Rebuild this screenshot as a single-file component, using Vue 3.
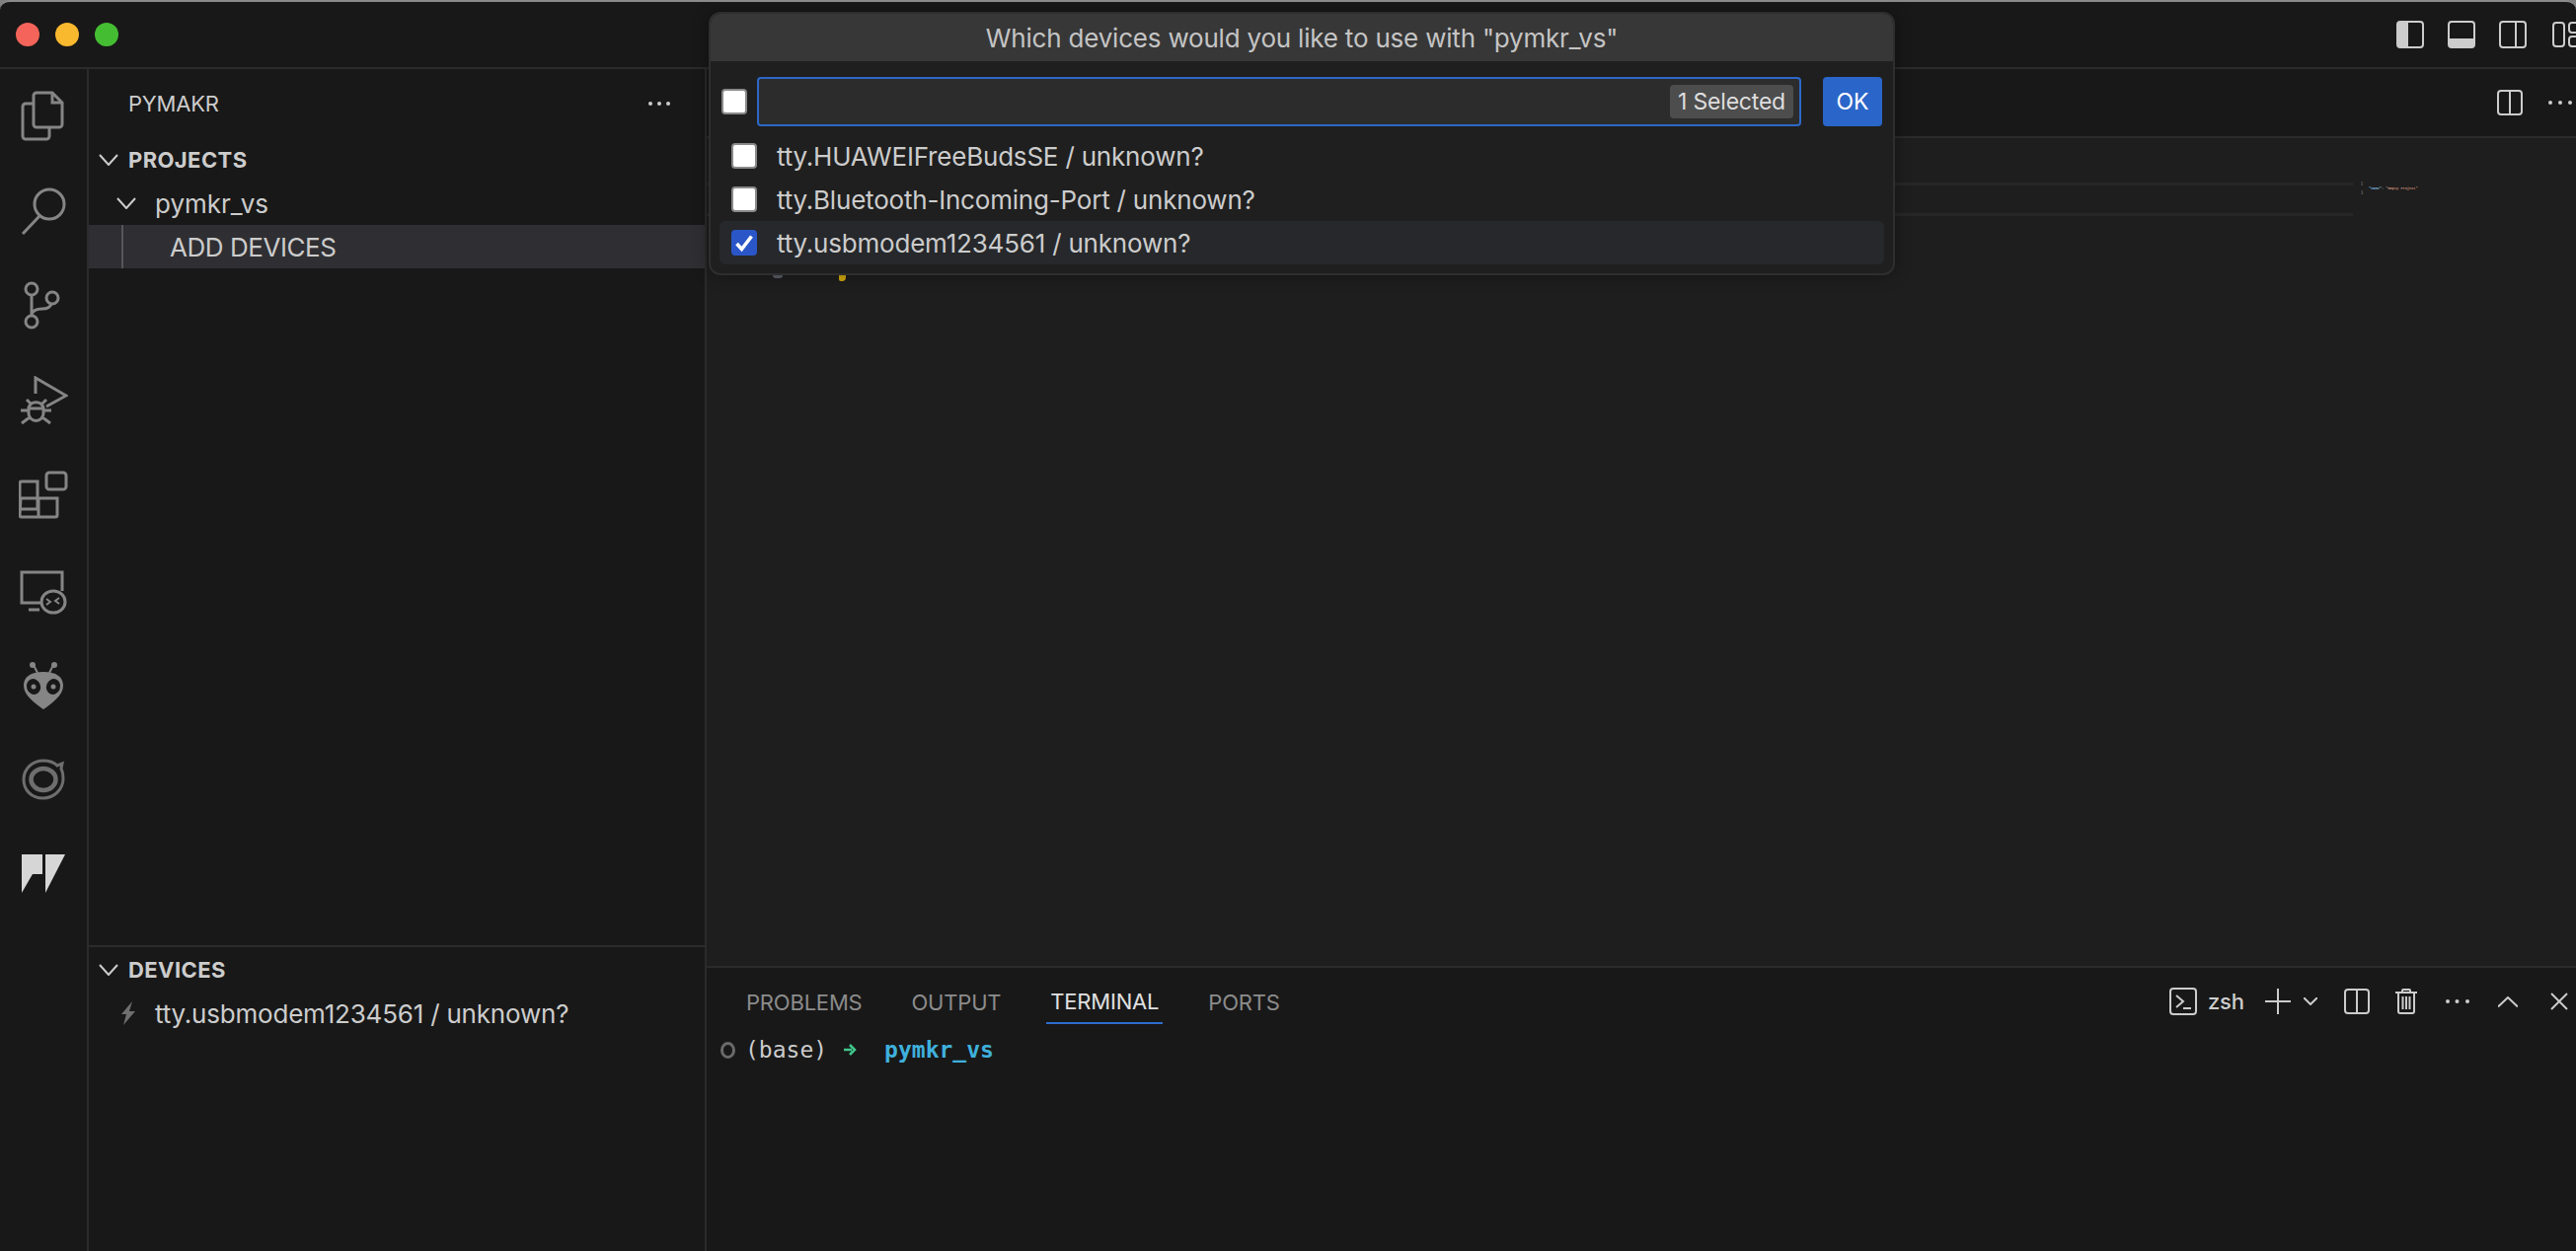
<script setup>
const activity = ['files', 'search', 'git', 'debug', 'ext', 'remote', 'pio', 'ring', 'flag']
const devices = [
  { name: 'tty.HUAWEIFreeBudsSE / unknown?', checked: false },
  { name: 'tty.Bluetooth-Incoming-Port / unknown?', checked: false },
  { name: 'tty.usbmodem1234561 / unknown?', checked: true },
]
const tabs = ['PROBLEMS', 'OUTPUT', 'TERMINAL', 'PORTS']
</script>

<template>
  <div class="window">
    <header class="titlebar">
      <div class="lights">
        <span class="light red"></span>
        <span class="light yellow"></span>
        <span class="light green"></span>
      </div>
      <div class="layout-icons">
        <svg width="28" height="28" viewBox="0 0 28 28"><rect x="1" y="1" width="26" height="26" rx="3" class="ln" /><path d="M1 4a3 3 0 0 1 3-3h8v26H4a3 3 0 0 1-3-3z" class="fl" /></svg>
        <svg width="28" height="28" viewBox="0 0 28 28"><rect x="1" y="1" width="26" height="26" rx="3" class="ln" /><path d="M1 18h26v6a3 3 0 0 1-3 3H4a3 3 0 0 1-3-3z" class="fl" /></svg>
        <svg width="28" height="28" viewBox="0 0 28 28"><rect x="1" y="1" width="26" height="26" rx="3" class="ln" /><path d="M17 1v26" class="ln" /></svg>
        <svg class="clip-icon" width="28" height="28" viewBox="0 0 28 28"><rect x="1" y="2" width="11" height="24" rx="3" class="ln" /><rect x="17" y="2" width="11" height="10" rx="3" class="ln" /><rect x="17" y="16" width="11" height="10" rx="3" class="ln" /></svg>
      </div>
    </header>

    <div class="workbench">
      <nav class="activity">
        <div v-for="a in activity" :key="a" class="act-cell" :class="'cell-' + a">
          <svg v-if="a === 'files'" width="48" height="52" viewBox="0 0 48 52" class="act"><path d="M17 2h16l10 10v22a3 3 0 0 1-3 3H17a3 3 0 0 1-3-3V5a3 3 0 0 1 3-3zM33 2v10h10M14 13H6a3 3 0 0 0-3 3v30a3 3 0 0 0 3 3h21a3 3 0 0 0 3-3v-9" /></svg>
          <svg v-else-if="a === 'search'" width="48" height="50" viewBox="0 0 48 50" class="act"><circle cx="30" cy="18" r="15" /><path d="M20 30 3 48" /></svg>
          <svg v-else-if="a === 'git'" width="40" height="50" viewBox="0 0 40 50" class="act"><circle cx="11" cy="8" r="6" /><circle cx="11" cy="41" r="6" /><circle cx="32" cy="17" r="6" /><path d="M11 14v21M11 34c1-5 5-6 11-6 5 0 8-2 9-5" /></svg>
          <svg v-else-if="a === 'debug'" width="50" height="50" viewBox="0 0 50 50" class="act"><path d="M17 18V2l31 18-20 11" /><path d="M10 32a8 8 0 0 1 15 0v6a7.500 7.500 0 0 1-15 0zM8 24l5 5M28 24l-5 5M2 35h8M25 35h8M3 48l8-6M32 48l-8-6M9 33h17" /></svg>
          <svg v-else-if="a === 'ext'" width="50" height="50" viewBox="0 0 50 50" class="act"><path d="M3 11h16v28H3a2 2 0 0 1-2-2V13a2 2 0 0 1 2-2zM2 28h37v17a2 2 0 0 1-2 2H3a2 2 0 0 1-2-2zM20 28v19" /><rect x="28" y="2" width="20" height="17" rx="3" /></svg>
          <svg v-else-if="a === 'remote'" width="50" height="46" viewBox="0 0 50 46" class="act"><path d="M22 33H3V2h41v19M10 40h11" /><ellipse cx="35" cy="32" rx="12" ry="11" /><path d="M28 29l4 3-4 3M41 28l-4 3 4 3" class="thin" /></svg>
          <svg v-else-if="a === 'pio'" width="42" height="50" viewBox="0 0 42 50"><path d="M21 10C8 10 1 15 1 24c0 10 12 18 20 24 8-6 20-14 20-24 0-9-7-14-20-14z" fill="#858585" /><path d="M15 11 11 3M27 11l4-8" stroke="#858585" stroke-width="2" /><circle cx="10" cy="3" r="3" fill="#858585" /><circle cx="32" cy="3" r="3" fill="#858585" /><ellipse cx="11" cy="25" rx="7" ry="8" fill="#181818" transform="rotate(-20 11 25)" /><ellipse cx="31" cy="25" rx="7" ry="8" fill="#181818" transform="rotate(20 31 25)" /><circle cx="11" cy="25" r="2.500" fill="#858585" /><circle cx="31" cy="25" r="2.500" fill="#858585" /></svg>
          <svg v-else-if="a === 'ring'" width="44" height="44" viewBox="0 0 44 44" class="ring"><path d="M41 6l-1 5c1.500 3 2 6.500 2 10 0 11-9 20-20.500 20S2 33 2 22 11 3 22 3c6 0 11 2 14 5z" stroke-width="3" /><ellipse cx="22" cy="22" rx="12.500" ry="11" stroke-width="4.500" /></svg>
          <svg v-else width="44" height="40" viewBox="0 0 44 40"><path d="M0 0h21v20h-10L0 39z" fill="#d6d6d6" /><path d="M24 0h20L24 39z" fill="#d6d6d6" /></svg>
        </div>
      </nav>

      <aside class="sidebar">
        <div class="side-main">
          <div class="side-head">
            <span class="side-title">PYMAKR</span>
            <svg class="dots-svg" width="24" height="6" viewBox="0 0 24 6"><circle cx="3" cy="3" r="2" /><circle cx="12" cy="3" r="2" /><circle cx="21" cy="3" r="2" /></svg>
          </div>
          <div class="sec-row">
            <svg class="chev" width="20" height="12" viewBox="0 0 20 12"><path d="M1 1l9 10 9-10" /></svg>
            <span class="sec-name">PROJECTS</span>
          </div>
          <div class="tree-row project">
            <svg class="chev" width="20" height="12" viewBox="0 0 20 12"><path d="M1 1l9 10 9-10" /></svg>
            <span>pymkr_vs</span>
          </div>
          <div class="tree-row selected">
            <span class="guide"></span>
            <span>ADD DEVICES</span>
          </div>
        </div>
        <div class="side-devices">
          <div class="sec-row devices-head">
            <svg class="chev" width="20" height="12" viewBox="0 0 20 12"><path d="M1 1l9 10 9-10" /></svg>
            <span class="sec-name">DEVICES</span>
          </div>
          <div class="tree-row device">
            <svg width="16" height="24" viewBox="0 0 16 24"><path d="M12 0 1 13h5L3 24l12-14H9z" fill="#6f6f6f" /></svg>
            <span>tty.usbmodem1234561 / unknown?</span>
          </div>
        </div>
      </aside>

      <main class="main">
        <div class="tabbar">
          <svg width="26" height="26" viewBox="0 0 26 26"><rect x="1" y="1" width="24" height="24" rx="3" class="ln" /><path d="M13 1v24" class="ln" /></svg>
          <svg class="dots-svg wide-dots" width="26" height="6" viewBox="0 0 26 6"><circle cx="3" cy="3" r="2" /><circle cx="13" cy="3" r="2" /><circle cx="23" cy="3" r="2" /></svg>
        </div>
        <div class="editor">
          <div class="editor-line"></div>
          <div class="minimap">
            <span>{</span>
            <span class="mm-line"><span class="mm-key">"name":</span> <span class="mm-val">"Empty Project"</span></span>
            <span>}</span>
          </div>
          <div class="peek"><span class="peek-gray"></span><span class="peek-yellow"></span></div>
        </div>
        <section class="panel">
          <div class="panel-head">
            <div class="panel-tabs">
              <span v-for="t in tabs" :key="t" class="ptab" :class="{ active: t === 'TERMINAL' }">{{ t }}</span>
            </div>
            <div class="panel-actions">
              <svg width="28" height="28" viewBox="0 0 28 28"><rect x="1" y="1" width="26" height="26" rx="3" class="ln" /><path d="M7 8l7 6-7 6M14 21h8" class="ln" /></svg>
              <span class="zsh">zsh</span>
              <svg class="a-plus" width="26" height="26" viewBox="0 0 26 26"><path d="M13 0v26M0 13h26" class="ln" /></svg>
              <svg class="a-chev" width="14" height="8" viewBox="0 0 14 8"><path d="M0 0l7 7 7-7" class="ln" /></svg>
              <svg class="a-split" width="26" height="26" viewBox="0 0 26 26"><rect x="1" y="1" width="24" height="24" rx="3" class="ln" /><path d="M13 1v24" class="ln" /></svg>
              <svg class="a-trash" width="22" height="26" viewBox="0 0 22 26"><path d="M0 4h22M7 4V2a1 1 0 0 1 1-1h6a1 1 0 0 1 1 1v2M3 4v19a2 2 0 0 0 2 2h12a2 2 0 0 0 2-2V4M7.500 8v13M11 8v13M14.500 8v13" class="ln" /></svg>
              <svg class="a-dots dots-svg" width="26" height="6" viewBox="0 0 26 6"><circle cx="3" cy="3" r="2" /><circle cx="12.500" cy="3" r="2" /><circle cx="23" cy="3" r="2" /></svg>
              <svg class="a-up" width="20" height="11" viewBox="0 0 20 11"><path d="M0 10.500 10 1l10 9.500" class="ln" /></svg>
              <svg class="a-x" width="18" height="18" viewBox="0 0 18 18"><path d="M1 1l16 16M17 1 1 17" class="ln" /></svg>
            </div>
          </div>
          <div class="term">
            <span class="term-dot"></span>
            <span class="term-base">(base)</span>
            <svg class="term-arrow" width="13" height="14" viewBox="0 0 13 14"><path d="M0 7h8M6 2l5 5-5 5" fill="none" stroke="#3fc88a" stroke-width="2.500" /></svg>
            <span class="term-dir">pymkr_vs</span>
          </div>
        </section>
      </main>
    </div>

    <div class="dialog">
      <div class="dialog-title">Which devices would you like to use with "pymkr_vs"</div>
      <div class="dialog-input-row">
        <span class="cb"></span>
        <div class="input">
          <span class="badge">1 Selected</span>
        </div>
        <button class="ok">OK</button>
      </div>
      <div class="list">
        <div v-for="d in devices" :key="d.name" class="item" :class="{ focused: d.checked }">
          <span class="cb" :class="{ on: d.checked }">
            <svg v-if="d.checked" width="26" height="26" viewBox="0 0 26 26"><path d="M5.500 14l5 5.500L20.500 6.500" fill="none" stroke="#fff" stroke-width="3.600" /></svg>
          </span>
          <span>{{ d.name }}</span>
        </div>
      </div>
    </div>
  </div>
</template>

<style>
html, body { margin: 0; background: #808080; }
</style>

<style scoped>
.window {
  position: relative;
  width: 2610px;
  height: 1268px;
  overflow: hidden;
  box-sizing: border-box;
  border-top: 2px solid #8a8a8a;
  border-radius: 10px 10px 0 0;
  background: #181818;
  color: #cccccc;
  font-family: Inter, "Noto Sans", sans-serif;
  font-size: 26px;
  letter-spacing: -0.2px;
}
.titlebar {
  height: 66px;
  border-bottom: 2px solid #2b2b2b;
  display: flex;
  align-items: center;
  justify-content: space-between;
}
.lights { display: flex; gap: 16px; padding-left: 16px; }
.light { width: 24px; height: 24px; border-radius: 50%; }
.red { background: #f4645a; }
.yellow { background: #f8b92e; }
.green { background: #45bd33; }
.layout-icons { display: flex; gap: 24px; margin-right: -4px; }
.clip-icon { margin-left: 2px; }
.ln { fill: none; stroke: #cccccc; stroke-width: 2; }
.fl { fill: #cccccc; }
.workbench { display: flex; height: 1198px; }
.activity { width: 88px; border-right: 2px solid #2b2b2b; flex: none; }
.act-cell { height: 96px; display: flex; align-items: center; justify-content: center; }
.cell-git { padding-right: 6px; box-sizing: border-box; }
.cell-remote { padding-top: 6px; box-sizing: border-box; }
.cell-pio { padding-top: 4px; box-sizing: border-box; }
.act { fill: none; stroke: #858585; stroke-width: 3; }
.act .thin { stroke-width: 2; }
.ring { fill: none; stroke: #6e6e6e; }
.sidebar {
  width: 624px;
  border-right: 2px solid #2b2b2b;
  flex: none;
  display: flex;
  flex-direction: column;
}
.side-main { height: 888px; border-bottom: 2px solid #2b2b2b; }
.side-head {
  height: 70px;
  display: flex;
  align-items: center;
  justify-content: space-between;
  padding: 0 34px 0 40px;
  font-size: 22px;
}
.dots-svg { fill: #cccccc; }
.sec-row {
  height: 44px;
  display: flex;
  align-items: center;
  gap: 10px;
  padding-left: 10px;
  font-size: 22px;
  font-weight: 700;
  letter-spacing: 0.4px;
}
.chev { fill: none; stroke: #cccccc; stroke-width: 2; flex: none; }
.tree-row { height: 44px; display: flex; align-items: center; }
.project { padding-left: 28px; gap: 19px; letter-spacing: 0; }
.selected {
  background: #2f2f33;
  position: relative;
  padding-left: 82px;
  letter-spacing: -0.45px;
}
.guide {
  position: absolute;
  left: 33px;
  top: 0;
  bottom: 0;
  width: 2px;
  background: #55555a;
}
.devices-head { height: 45px; }
.device { padding-left: 32px; gap: 19px; }
.main { flex: 1; min-width: 0; display: flex; flex-direction: column; }
.tabbar {
  height: 68px;
  border-bottom: 2px solid #2b2b2b;
  display: flex;
  align-items: center;
  justify-content: flex-end;
  gap: 25px;
  padding-right: 3px;
  flex: none;
}
.wide-dots { flex: none; }
.editor { height: 839px; background: #1e1e1e; border-bottom: 2px solid #2b2b2b; position: relative; flex: none; }
.editor-line {
  position: absolute;
  left: 0;
  width: 1668px;
  top: 45px;
  height: 28px;
  border-top: 3px solid #272727;
  border-bottom: 3px solid #272727;
}
.minimap {
  position: absolute;
  left: 1676px;
  top: 44px;
  display: flex;
  flex-direction: column;
  font-family: "Liberation Mono", monospace;
  font-size: 3.600px;
  line-height: 4.500px;
  letter-spacing: 0;
  font-weight: 700;
  color: #8a8a8a;
}
.mm-line { padding-left: 8px; white-space: pre; }
.mm-key { color: #7fb9dc; }
.mm-val { color: #c08a70; }
.peek { position: absolute; left: 67px; top: 139px; display: flex; gap: 57px; }
.peek-gray { width: 10px; height: 3px; border-radius: 0 0 5px 5px; background: #5a5e66; }
.peek-yellow { width: 7px; height: 6px; border-radius: 0 0 4px 2px; background: #d4a90c; }
.panel { flex: 1; background: #181818; }
.panel-head {
  height: 68px;
  display: flex;
  align-items: flex-start;
  justify-content: space-between;
}
.panel-tabs { display: flex; gap: 42px; padding-left: 36px; }
.ptab {
  display: flex;
  align-items: center;
  height: 57px;
  padding: 12px 4px 0;
  font-size: 22px;
  color: #8c8c8c;
  box-sizing: border-box;
}
.ptab.active { color: #e0e0e0; border-bottom: 2px solid #2e6dd0; }
.panel-actions { display: flex; align-items: center; padding-right: 8px; height: 68px; }
.zsh { margin-left: 11px; font-size: 22px; font-weight: 500; width: 36px; }
.a-plus { margin-left: 22px; }
.a-chev { margin-left: 13px; }
.a-split { margin-left: 27px; }
.a-trash { margin-left: 26px; }
.a-dots { margin-left: 28px; }
.a-up { margin-left: 28px; }
.a-x { margin-left: 33px; }
.term {
  display: flex;
  align-items: center;
  height: 30px;
  padding-left: 14px;
  font-family: "DejaVu Sans Mono", monospace;
  font-size: 23px;
  letter-spacing: 0;
}
.term-dot { width: 15px; height: 17px; box-sizing: border-box; border: 3.500px solid #6a6a6a; border-radius: 50%; }
.term-base { margin-left: 10px; color: #cccccc; }
.term-arrow { margin-left: 17px; }
.term-dir { margin-left: 28px; color: #3fb0dc; font-weight: 700; }

.dialog {
  position: absolute;
  left: 718px;
  top: 10px;
  width: 1202px;
  height: 267px;
  box-sizing: border-box;
  background: #1f1f1f;
  border: 2px solid #2e2e2e;
  border-radius: 12px;
  overflow: hidden;
  box-shadow: 0 0 16px rgba(0, 0, 0, 0.36);
}
.dialog-title {
  height: 48px;
  background: #373737;
  display: flex;
  align-items: center;
  justify-content: center;
  color: #c4c4c4;
}
.dialog-input-row {
  display: flex;
  align-items: flex-start;
  padding: 16px 0 0 11px;
}
.dialog-input-row > .cb { margin-top: 12px; }
.cb {
  width: 26px;
  height: 26px;
  box-sizing: border-box;
  flex: none;
  background: #fff;
  border: 2px solid #8a8a8a;
  border-radius: 4px;
}
.cb.on { background: #2a56c8; border-color: #2a56c8; position: relative; }
.cb.on svg { position: absolute; left: -2px; top: -2px; }
.input {
  width: 1058px;
  height: 50px;
  margin-left: 10px;
  box-sizing: border-box;
  background: #2c2c2c;
  border: 2px solid #2c68c8;
  border-radius: 4px;
  display: flex;
  align-items: center;
  justify-content: flex-end;
  padding-right: 6px;
}
.badge {
  height: 34px;
  line-height: 34px;
  padding: 0 8px;
  background: #4d4d4d;
  border-radius: 4px;
  font-size: 23px;
  color: #dedede;
}
.ok {
  width: 60px;
  height: 50px;
  margin-left: 22px;
  border: none;
  border-radius: 4px;
  background: #2a66c9;
  color: #fff;
  font: inherit;
  font-size: 23px;
  padding: 0;
}
.list { padding: 8px 9px 0; }
.item {
  height: 44px;
  display: flex;
  align-items: center;
  gap: 20px;
  padding-left: 12px;
  border-radius: 6px;
}
.item.focused { background: #26282b; }
</style>
